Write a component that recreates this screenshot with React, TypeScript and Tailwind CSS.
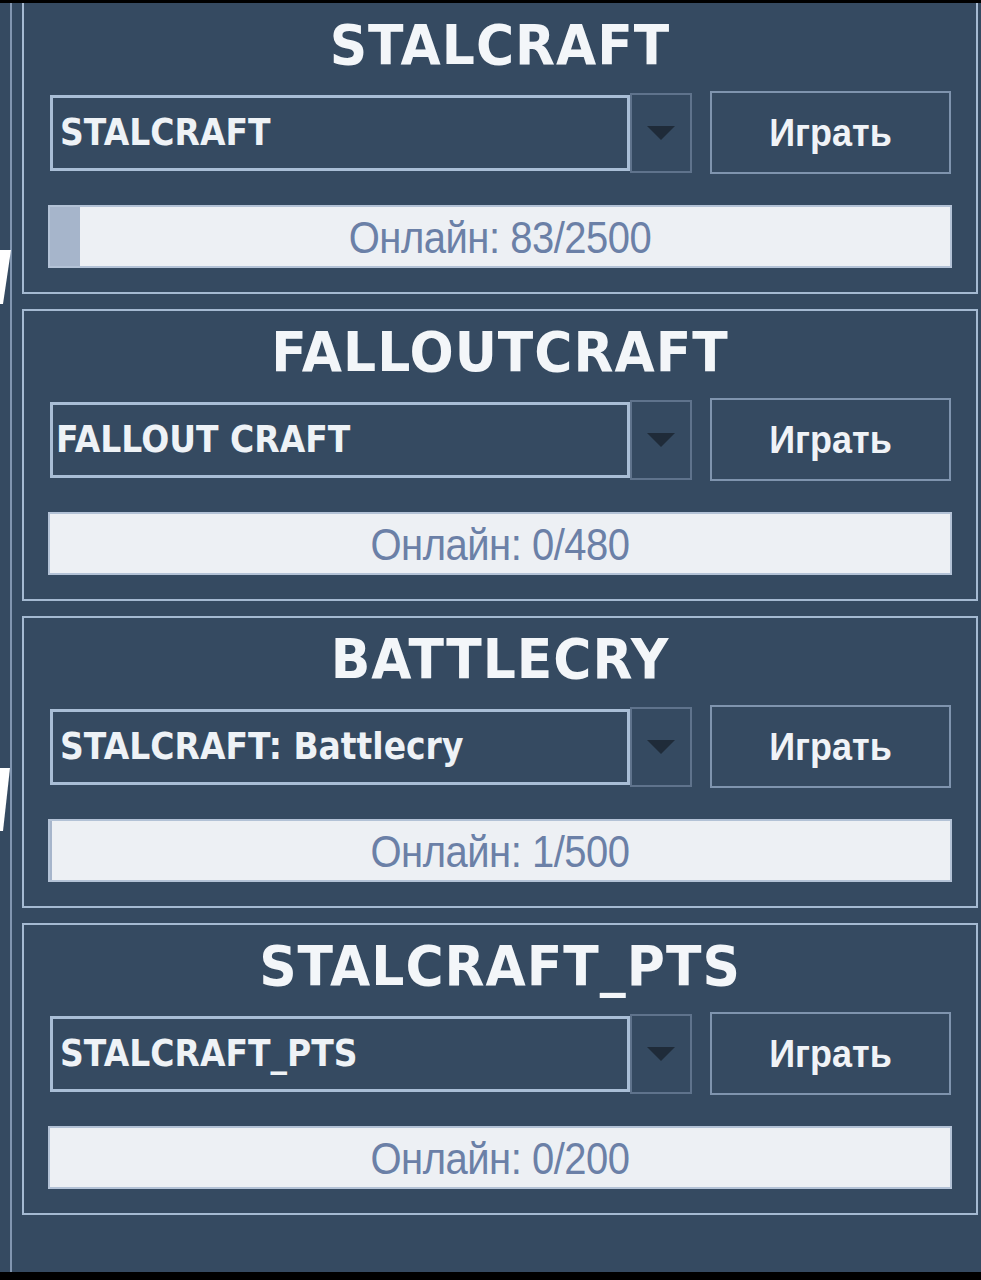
import React from 'react';

type Server = {
  title: string;
  option: string;
  online: number;
  max: number;
  textPad: string;
};

const servers: Server[] = [
  { title: 'STALCRAFT', option: 'STALCRAFT', online: 83, max: 2500, textPad: 'pl-[7px]' },
  { title: 'FALLOUTCRAFT', option: 'FALLOUT CRAFT', online: 0, max: 480, textPad: 'pl-[3px]' },
  { title: 'BATTLECRY', option: 'STALCRAFT: Battlecry', online: 1, max: 500, textPad: 'pl-[7px]' },
  { title: 'STALCRAFT_PTS', option: 'STALCRAFT_PTS', online: 0, max: 200, textPad: 'pl-[7px]' },
];

function ServerPanel({ server, first }: { server: Server; first?: boolean }) {
  const ratio = server.max ? server.online / server.max : 0;

  return (
    <div
      className={`flex flex-col border-2 border-[#a5bad2] px-[24px] ${
        first ? 'border-t-0 h-[291px]' : 'h-[292px]'
      }`}
    >
      {/* Title */}
      <div className={`flex items-center justify-center ${first ? 'h-[83px]' : 'h-[82px]'}`}>
        <span className="inline-block scale-y-[1.06] font-['DejaVu_Sans',sans-serif] text-[52px] font-bold leading-none tracking-[1px] text-[#f3f6f9]">
          {server.title}
        </span>
      </div>

      {/* Combo + button */}
      <div className="mt-[5px] flex h-[83px] items-center pl-[2px]">
        <div className="flex h-[76px] w-[580px] items-center border-[3px] border-[#a9bed6]">
          <span
            className={`${server.textPad} inline-block scale-y-[1.12] font-['DejaVu_Sans',sans-serif] text-[33px] font-bold leading-none text-[#eef2f6]`}
          >
            {server.option}
          </span>
        </div>
        <div className="flex h-[80px] w-[62px] items-center justify-center border-2 border-[#5f738c]">
          <svg width="28" height="14" viewBox="0 0 28 14">
            <polygon points="0,0 28,0 14,14" fill="#1f2b39" />
          </svg>
        </div>
        <button className="ml-[18px] flex h-[83px] w-[241px] items-center justify-center border-2 border-[#7f94ae]">
          <span className="inline-block scale-y-[1.1] font-['Liberation_Sans',Arial,sans-serif] text-[36px] font-bold leading-none text-[#f0f3f7]">
            Играть
          </span>
        </button>
      </div>

      {/* Online bar */}
      <div className="relative mt-[31px] flex h-[63px] items-center justify-center border-2 border-[#b3c2d6] bg-[#edf0f4]">
        <div
          className="absolute bottom-0 left-0 top-0 bg-[#a6b5cb]"
          style={{ width: `${Math.round(ratio * 899)}px` }}
        />
        <span className="relative inline-block scale-y-[1.12] font-['Liberation_Sans',Arial,sans-serif] text-[40px] leading-none tracking-[-0.5px] text-[#6b80a7]">
          Онлайн: {server.online}/{server.max}
        </span>
      </div>
    </div>
  );
}

export default function App() {
  return (
    <div className="flex h-[1280px] w-[981px] flex-col overflow-hidden bg-[#354a61]">
      <div className="h-[3px] bg-black" />

      <div className="flex flex-1">
        {/* Left strip */}
        <div className="relative w-[22px] shrink-0">
          <div className="ml-[10px] h-full w-[2px] bg-[#8296b0]" />
          <svg className="absolute left-0 top-[247px]" width="12" height="54" viewBox="0 0 12 54">
            <polygon points="0,0 11,0 3,54 0,54" fill="#ffffff" />
          </svg>
          <svg className="absolute left-0 top-[765px]" width="12" height="63" viewBox="0 0 12 63">
            <polygon points="0,0 10,0 3,63 0,63" fill="#ffffff" />
          </svg>
        </div>

        {/* Panels */}
        <div className="flex w-[956px] flex-col gap-[15px]">
          {servers.map((s, i) => (
            <ServerPanel key={s.title} server={s} first={i === 0} />
          ))}
        </div>
      </div>

      <div className="h-[8px] bg-black" />
    </div>
  );
}
